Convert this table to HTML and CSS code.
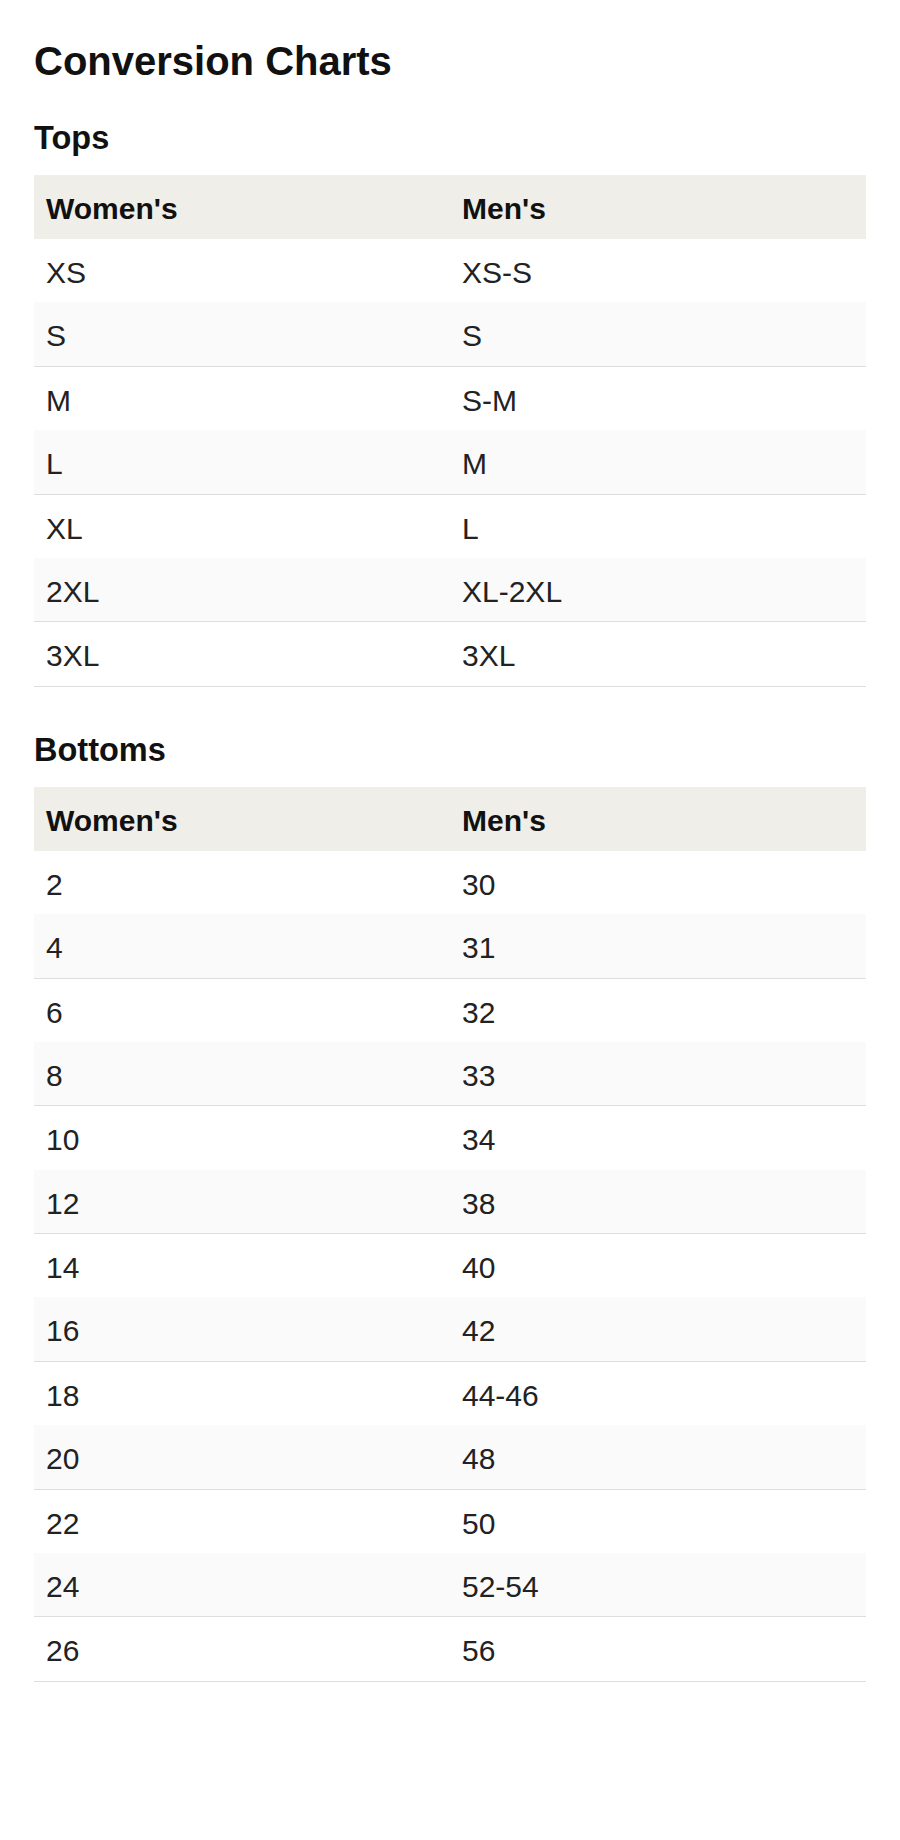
FILE: index.html
```html
<!DOCTYPE html>
<html lang="en">
<head>
<meta charset="utf-8">
<title>Conversion Charts</title>
<link rel="stylesheet" href="styles.css">
</head>
<body>
<main class="page">
  <h1 class="title">Conversion Charts</h1>

  <section class="chart">
    <h2 class="chart-title">Tops</h2>
    <table class="size-table">
      <thead>
        <tr><th>Women's</th><th>Men's</th></tr>
      </thead>
      <tbody>
        <tr><td>XS</td><td>XS-S</td></tr>
        <tr><td>S</td><td>S</td></tr>
        <tr><td>M</td><td>S-M</td></tr>
        <tr><td>L</td><td>M</td></tr>
        <tr><td>XL</td><td>L</td></tr>
        <tr><td>2XL</td><td>XL-2XL</td></tr>
        <tr><td>3XL</td><td>3XL</td></tr>
      </tbody>
    </table>
  </section>

  <section class="chart">
    <h2 class="chart-title">Bottoms</h2>
    <table class="size-table">
      <thead>
        <tr><th>Women's</th><th>Men's</th></tr>
      </thead>
      <tbody>
        <tr><td>2</td><td>30</td></tr>
        <tr><td>4</td><td>31</td></tr>
        <tr><td>6</td><td>32</td></tr>
        <tr><td>8</td><td>33</td></tr>
        <tr><td>10</td><td>34</td></tr>
        <tr><td>12</td><td>38</td></tr>
        <tr><td>14</td><td>40</td></tr>
        <tr><td>16</td><td>42</td></tr>
        <tr><td>18</td><td>44-46</td></tr>
        <tr><td>20</td><td>48</td></tr>
        <tr><td>22</td><td>50</td></tr>
        <tr><td>24</td><td>52-54</td></tr>
        <tr><td>26</td><td>56</td></tr>
      </tbody>
    </table>
  </section>
</main>
</body>
</html>
```

FILE: styles.css
```css
html, body {
  margin: 0;
  padding: 0;
  background: #ffffff;
}

body {
  font-family: "Liberation Sans", Arial, Helvetica, sans-serif;
  color: #222222;
}

.page {
  padding: 37px 34px 40px;
}

.title {
  margin: 0 0 34px;
  font-size: 40px;
  line-height: 48px;
  font-weight: 700;
  color: #111111;
}

.chart + .chart {
  margin-top: 44px;
}

.chart-title {
  margin: 0 0 18px;
  font-size: 32.5px;
  line-height: 38px;
  font-weight: 700;
  color: #111111;
}

.size-table {
  width: 100%;
  border-collapse: collapse;
  table-layout: fixed;
  border-bottom: 1px solid #dedede;
}

.size-table th,
.size-table td {
  width: 50%;
  padding: 17px 12px 12.4px;
  font-size: 30px;
  line-height: 34px;
  text-align: left;
  vertical-align: middle;
}

.size-table th {
  padding-bottom: 13px;
  font-weight: 700;
  color: #111111;
  background: #efeee9;
}

.size-table td {
  font-weight: 400;
  color: #222222;
}

.size-table tbody tr:nth-child(even) {
  background: #fafafa;
  border-bottom: 1px solid #dedede;
}
```
